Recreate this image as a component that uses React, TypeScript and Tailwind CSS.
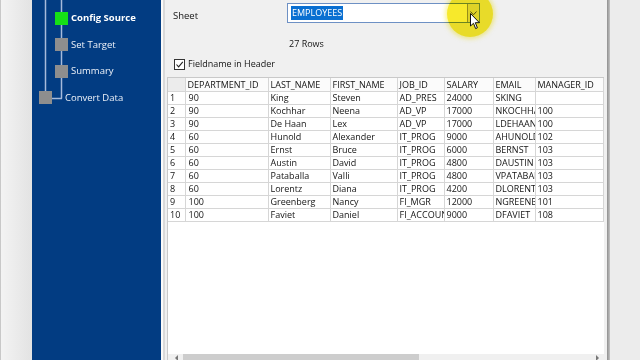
import React from 'react'

const columns = [
  { name: '', w: 17 },
  { name: 'DEPARTMENT_ID', w: 83 },
  { name: 'LAST_NAME', w: 62 },
  { name: 'FIRST_NAME', w: 67 },
  { name: 'JOB_ID', w: 47 },
  { name: 'SALARY', w: 49 },
  { name: 'EMAIL', w: 42 },
  { name: 'MANAGER_ID', w: 68 },
]

const rows = [
  ['90', 'King', 'Steven', 'AD_PRES', '24000', 'SKING', ''],
  ['90', 'Kochhar', 'Neena', 'AD_VP', '17000', 'NKOCHHAR', '100'],
  ['90', 'De Haan', 'Lex', 'AD_VP', '17000', 'LDEHAAN', '100'],
  ['60', 'Hunold', 'Alexander', 'IT_PROG', '9000', 'AHUNOLD', '102'],
  ['60', 'Ernst', 'Bruce', 'IT_PROG', '6000', 'BERNST', '103'],
  ['60', 'Austin', 'David', 'IT_PROG', '4800', 'DAUSTIN', '103'],
  ['60', 'Pataballa', 'Valli', 'IT_PROG', '4800', 'VPATABAL', '103'],
  ['60', 'Lorentz', 'Diana', 'IT_PROG', '4200', 'DLORENTZ', '103'],
  ['100', 'Greenberg', 'Nancy', 'FI_MGR', '12000', 'NGREENBE', '101'],
  ['100', 'Faviet', 'Daniel', 'FI_ACCOUNT', '9000', 'DFAVIET', '108'],
]

const steps = [
  { label: 'Config Source', active: true },
  { label: 'Set Target', active: false },
  { label: 'Summary', active: false },
]

export default function App() {
  return (
    <div className="relative flex h-[360px] w-[640px] overflow-hidden bg-[#ededed] font-['Open_Sans','Noto_Sans',sans-serif] text-[9px] text-[#141414]">
      {/* desktop strip on the left */}
      <div className="w-[32px] shrink-0 border-l border-[#c8c8c8] bg-gradient-to-r from-[#f3f3f3] to-[#e3e3e3]" />

      {/* wizard steps */}
      <div className="relative w-[129px] shrink-0 bg-[#023c82] pt-[5px] text-[#eef2f9]">
        <svg className="absolute inset-0" width="129" height="360">
          <line x1="13.5" y1="0" x2="13.5" y2="92" stroke="#a6badb" strokeWidth="1.5" />
          <line x1="29.5" y1="0" x2="29.5" y2="98.5" stroke="#a6badb" strokeWidth="1.5" />
          <line x1="20" y1="98.5" x2="30" y2="98.5" stroke="#a6badb" strokeWidth="1.5" />
        </svg>
        <div className="relative flex flex-col">
          {steps.map((s) => (
            <div key={s.label} className="flex h-[26.5px] items-center pl-[23px]">
              <div className={`h-[13px] w-[13px] ${s.active ? 'bg-[#16e016]' : 'bg-[#8e8e8e]'}`} />
              <span className={`ml-[3px] text-[9.5px] ${s.active ? 'font-bold text-white' : ''}`}>{s.label}</span>
            </div>
          ))}
          <div className="flex h-[26.5px] items-center pl-[7px]">
            <div className="h-[13px] w-[13px] bg-[#8e8e8e]" />
            <span className="ml-[13px] text-[9.5px]">Convert Data</span>
          </div>
        </div>
      </div>

      {/* separator */}
      <div className="w-[4px] shrink-0 border-l-2 border-[#fafafa] bg-[#d9d9d9]" />

      {/* config panel */}
      <div className="flex w-[442px] shrink-0 flex-col bg-[#f0f0f0]">
        <div className="flex items-center pt-[3px] pl-[8px]">
          <span className="mt-[6px] w-[114px] text-[9.5px]">Sheet</span>
          <div className="flex h-[20px] w-[193px] items-center border border-[#6d90c4] bg-white">
            <span className="ml-[3px] bg-[#0a6fd1] px-[1px] leading-[14px] text-white">EMPLOYEES</span>
            <div className="ml-auto flex h-full w-[12px] items-center justify-center border-l border-[#9a9a9a] bg-[#e6e6e6]">
              <svg width="7" height="5" viewBox="0 0 7 5">
                <path d="M0.5 0.5 L3.5 3.8 L6.5 0.5" fill="none" stroke="#555" strokeWidth="1" />
              </svg>
            </div>
          </div>
        </div>

        <div className="mt-[14px] pl-[124px] text-[9px] leading-[14px]">27 Rows</div>

        <label className="mt-[6px] flex items-center pl-[9px] text-[9px]">
          <span className="flex h-[11px] w-[11px] items-center justify-center border border-[#333] bg-white">
            <svg width="9" height="9" viewBox="0 0 9 9">
              <path d="M1.5 4.5 L3.6 6.8 L7.8 1.8" fill="none" stroke="#222" strokeWidth="1.1" />
            </svg>
          </span>
          <span className="ml-[3px]">Fieldname in Header</span>
        </label>

        <div className="mt-[6px] mr-[3px] ml-[2px] flex flex-1 flex-col border-t border-l border-[#c9c9c9] bg-white">
          <div className="flex-1">
            <table className="w-[435px] table-fixed border-collapse">
              <colgroup>
                {columns.map((c, i) => (
                  <col key={i} style={{ width: c.w }} />
                ))}
              </colgroup>
              <thead>
                <tr className="h-[13.5px]">
                  {columns.map((c, i) => (
                    <th
                      key={i}
                      className={`overflow-hidden border-r border-b border-[#d6d6d6] px-[2px] text-left font-normal whitespace-nowrap ${
                        i === 0 ? 'bg-[#ececec]' : 'bg-[#fbfbfb]'
                      }`}
                    >
                      {c.name}
                    </th>
                  ))}
                </tr>
              </thead>
              <tbody>
                {rows.map((r, i) => (
                  <tr key={i} className="h-[12.8px]">
                    <td className="overflow-hidden border-r border-b border-[#d6d6d6] px-[2px] leading-[12px] whitespace-nowrap">{i + 1}</td>
                    {r.map((v, j) => (
                      <td
                        key={j}
                        className={`overflow-hidden border-r border-b border-[#d6d6d6] leading-[12px] whitespace-nowrap ${
                          j === 0 ? 'pl-[3px]' : 'pl-[2px]'
                        }`}
                      >
                        {v}
                      </td>
                    ))}
                  </tr>
                ))}
              </tbody>
            </table>
          </div>

          {/* horizontal scrollbar */}
          <div className="flex h-[6px] items-start bg-[#f0f0f0]">
            <span className="ml-[7px] mt-[1px] h-0 w-0 border-y-[3px] border-r-[3px] border-y-transparent border-r-[#777]" />
            <div className="ml-[5px] h-[6px] w-[236px] bg-[#cdcdcd]" />
            <span className="mt-[1px] mr-[5px] ml-auto h-0 w-0 border-y-[3px] border-l-[3px] border-y-transparent border-l-[#777]" />
          </div>
        </div>
      </div>

      {/* window edge */}
      <div className="w-[3px] shrink-0 bg-gradient-to-r from-[#8f8f8f] to-[#c4c4c4]" />
      <div className="flex-1 bg-[#ececec]" />

      {/* cursor highlight */}
      <div className="pointer-events-none absolute top-[-9px] left-[447px] h-[46px] w-[46px] rounded-full bg-[#f6e714] opacity-90 mix-blend-multiply shadow-[0_0_4px_2px_rgba(246,231,20,0.5)]" />
      <svg className="pointer-events-none absolute top-[13px] left-[470px]" width="11" height="17" viewBox="0 0 11 17">
        <path d="M0.5 0.5 L0.5 13 L3.5 10.3 L5.6 15.6 L7.4 14.8 L5.3 9.7 L9.4 9.7 Z" fill="#fff" stroke="#111" strokeWidth="1" strokeLinejoin="round" />
      </svg>
    </div>
  )
}
